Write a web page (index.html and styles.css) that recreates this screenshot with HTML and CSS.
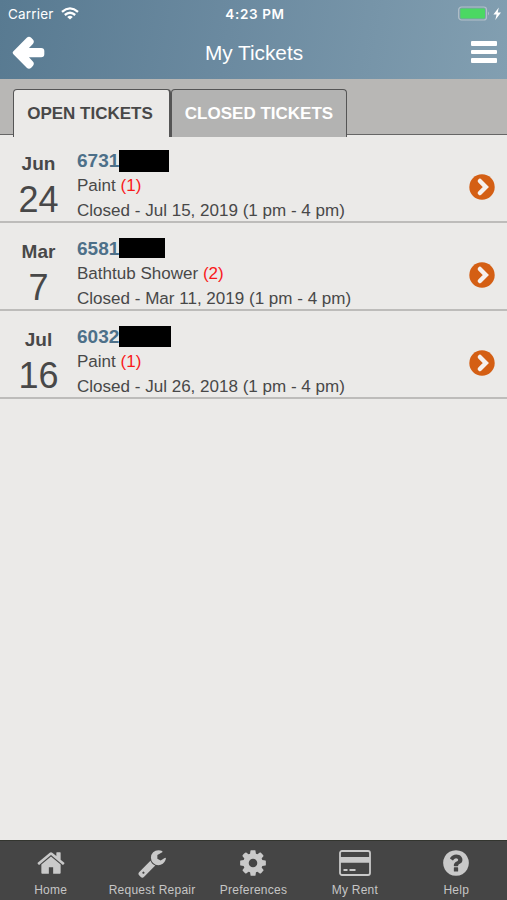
FILE: index.html
```html
<!DOCTYPE html>
<html lang="en">
<head>
<meta charset="utf-8">
<title>My Tickets</title>
<link rel="stylesheet" href="styles.css">
</head>
<body>
<header class="header">
  <div class="status">
    <div class="carrier"><span>Carrier</span>
      <svg class="wifi" viewBox="0 0 18 13" fill="none" stroke="#fff" stroke-width="2.300"><path d="M1 4.800Q9-2 17 4.800M3.800 8Q9 3.600 14.200 8"/><path d="M6.200 9.900Q9 7.700 11.800 9.900L9 12.600Z" fill="#fff" stroke="none"/></svg>
    </div>
    <span class="clock">4:23 PM</span>
    <div class="power">
      <svg viewBox="0 0 44 16"><rect x=".7" y="1" width="27.800" height="13" rx="2.800" fill="none" stroke="#b3c0c9" stroke-width="1.200"/><rect x="2.300" y="2.600" width="24.700" height="9.800" rx="1" fill="#4bd863"/><path d="M30 5.500q2 2 0 4z" fill="#b3c0c9"/><path d="M40.800 1.600L35.400 8.600H38.600L37.300 13.900L43 6.500H39.700Z" fill="#fff"/></svg>
    </div>
  </div>
  <div class="navbar">
    <svg class="back" viewBox="0 0 34 36"><path d="M1.200 16.500L15.200 2.200Q17.500.200 19.800 2.200L21.500 4Q23.500 6.300 21.500 8.600L17.500 12.900H30Q33.300 13.100 33.300 16V19.300Q33.300 22.300 30 22.500H17.500L21.500 26.800Q23.500 29.100 21.500 31.400L19.800 33.100Q17.500 35.100 15.200 33.100L1.200 19.100Q0 17.800 1.200 16.500Z" fill="#fff"/></svg>
    <h1>My Tickets</h1>
    <div class="menu"><i></i><i></i><i></i></div>
  </div>
</header>
<nav class="tabs">
  <div class="tab active"><span>OPEN TICKETS</span></div>
  <div class="tab"><span>CLOSED TICKETS</span></div>
</nav>
<main class="list">
  <article class="row">
    <div class="date"><b>Jun</b><span>24</span></div>
    <div class="info">
      <div class="number">6731<i class="mask first"></i></div>
      <div class="line">Paint <em>(1)</em></div>
      <div class="line detail">Closed - Jul 15, 2019 (1 pm - 4 pm)</div>
    </div>
    <svg class="go" viewBox="0 0 26 26"><circle cx="13" cy="13" r="12.700" fill="#d45f14"/><path d="M10.900 7L16.800 13L10.900 19" fill="none" stroke="#f6f1ee" stroke-width="4.500" stroke-linecap="round"/></svg>
  </article>
  <article class="row">
    <div class="date"><b>Mar</b><span>7</span></div>
    <div class="info">
      <div class="number">6581<i class="mask second"></i></div>
      <div class="line">Bathtub Shower <em>(2)</em></div>
      <div class="line detail">Closed - Mar 11, 2019 (1 pm - 4 pm)</div>
    </div>
    <svg class="go" viewBox="0 0 26 26"><circle cx="13" cy="13" r="12.700" fill="#d45f14"/><path d="M10.900 7L16.800 13L10.900 19" fill="none" stroke="#f6f1ee" stroke-width="4.500" stroke-linecap="round"/></svg>
  </article>
  <article class="row">
    <div class="date"><b>Jul</b><span>16</span></div>
    <div class="info">
      <div class="number">6032<i class="mask third"></i></div>
      <div class="line">Paint <em>(1)</em></div>
      <div class="line detail">Closed - Jul 26, 2018 (1 pm - 4 pm)</div>
    </div>
    <svg class="go" viewBox="0 0 26 26"><circle cx="13" cy="13" r="12.700" fill="#d45f14"/><path d="M10.900 7L16.800 13L10.900 19" fill="none" stroke="#f6f1ee" stroke-width="4.500" stroke-linecap="round"/></svg>
  </article>
</main>
<footer class="footer">
  <div class="item"><svg viewBox="0 0 1792 1792"><path d="M1472 992v480q0 26-19 45t-45 19h-384v-384h-256v384h-384q-26 0-45-19t-19-45v-480q0-1 .5-3t.5-3l575-474 575 474q1 2 1 6zm223-69l-62 74q-8 9-21 11h-3q-13 0-21-7l-692-577-692 577q-12 8-24 7-13-2-21-11l-62-74q-8-10-7-23.500t11-21.500l719-599q32-26 76-26t76 26l244 204v-195q0-14 9-23t23-9h192q14 0 23 9t9 23v408l219 182q10 8 11 21.500t-7 23.500z"/></svg><span>Home</span></div>
  <div class="item"><svg viewBox="0 0 1792 1792"><path d="M448 1472q0-26-19-45t-45-19-45 19-19 45 19 45 45 19 45-19 19-45zm644-420l-682 682q-37 37-90 37-52 0-91-37l-106-108q-38-36-38-90 0-53 38-91l681-681q39 98 114.500 173.500t173.500 114.500zm634-435q0 39-23 106-47 134-164.500 217.500t-258.500 83.500q-185 0-316.500-131.500t-131.500-316.500 131.500-316.500 316.500-131.500q58 0 121.500 16.500t107.500 46.500q16 11 16 28t-16 28l-293 169v224l193 107q5-3 79-48.500t135.500-81 70.500-35.500q15 0 23.500 10t8.500 25z"/></svg><span>Request Repair</span></div>
  <div class="item"><svg viewBox="0 0 1792 1792"><path d="M1152 896q0-106-75-181t-181-75-181 75-75 181 75 181 181 75 181-75 75-181zm512-109v222q0 12-8 23t-20 13l-185 28q-19 54-39 91 35 50 107 138 10 12 10 25t-9 23q-27 37-99 108t-94 71q-12 0-26-9l-138-108q-44 23-91 38-16 136-29 186-7 28-36 28h-222q-14 0-24.500-8.500t-11.500-21.500l-28-184q-49-16-90-37l-141 107q-10 9-25 9-14 0-25-11-126-114-165-168-7-10-7-23 0-12 8-23 15-21 51-66.500t54-70.500q-27-50-41-99l-183-27q-13-2-21-12.500t-8-23.500v-222q0-12 8-23t19-13l186-28q14-46 39-92-40-57-107-138-10-12-10-24 0-10 9-23 26-36 98.500-107.500t94.500-71.500q13 0 26 10l138 107q44-23 91-38 16-136 29-186 7-28 36-28h222q14 0 24.500 8.500t11.500 21.500l28 184q49 16 90 37l142-107q9-9 24-9 13 0 25 10 129 119 165 170 7 8 7 22 0 12-8 23-15 21-51 66.500t-54 70.500q26 50 41 98l183 28q13 2 21 12.500t8 23.500z"/></svg><span>Preferences</span></div>
  <div class="item"><svg class="card" viewBox="0 0 32 30"><rect x="1" y="3" width="30" height="24" rx="2" fill="none" stroke="#c9c9c9" stroke-width="1.800"/><path d="M1 9h30v5.800H1zM4.500 21h4v2h-4zM10.500 21h6v2h-6z"/></svg><span>My Rent</span></div>
  <div class="item"><svg viewBox="0 0 1792 1792"><path d="M1024 1376v-192q0-14-9-23t-23-9h-192q-14 0-23 9t-9 23v192q0 14 9 23t23 9h192q14 0 23-9t9-23zm256-672q0-88-55.500-163t-138.500-116-170-41q-243 0-371 213-15 24 8 42l132 100q7 6 19 6 16 0 25-12 53-68 86-92 34-24 86-24 48 0 85.500 26t37.500 59q0 38-20 61t-68 45q-63 28-115.500 86.500t-52.500 125.500v36q0 14 9 23t23 9h192q14 0 23-9t9-23q0-19 21.500-49.500t54.500-49.500q32-18 49-28.500t46-35 44.500-48 28-60.500 12.500-81zm384 192q0 209-103 385.500t-279.500 279.500-385.500 103-385.500-103-279.500-279.500-103-385.500 103-385.500 279.500-279.500 385.500-103 385.500 103 279.500 279.500 103 385.500z"/></svg><span>Help</span></div>
</footer>
</body>
</html>
```
FILE: styles.css
```css
* { box-sizing: border-box; }
body {
  margin: 0;
  height: 900px;
  display: flex;
  flex-direction: column;
  background: #ebeae8;
  color: #484848;
  font-family: "Liberation Sans", Arial, sans-serif;
  overflow: hidden;
}
.header {
  height: 79px;
  flex: none;
  color: #fff;
  background: linear-gradient(100deg, #587a91 0%, #6b8aa0 45%, #829fb1 100%);
}
.status {
  height: 27px;
  display: grid;
  grid-template-columns: 1fr auto 1fr;
  align-items: center;
  padding: 0 5px 0 8px;
  font-family: Inter, sans-serif;
  font-size: 13.500px;
}
.carrier { display: flex; align-items: center; gap: 7px; letter-spacing: .2px; }
.wifi { width: 18px; height: 13px; }
.clock { font-weight: 600; letter-spacing: .65px; }
.power { display: flex; justify-content: flex-end; }
.power svg { width: 44px; height: 16px; }
.navbar {
  height: 52px;
  display: grid;
  grid-template-columns: 1fr auto 1fr;
  align-items: center;
  padding: 0 10px 0 12px;
}
.back { width: 33px; height: 36px; }
h1 { margin: 0 1px 0 0; font-weight: 400; font-size: 20.800px; line-height: 24px; }
.menu { display: flex; flex-direction: column; gap: 4px; justify-self: end; margin-top: -2px; }
.menu i { width: 26px; height: 4.500px; border-radius: 1px; background: #fff; }
.tabs {
  height: 56px;
  flex: none;
  display: flex;
  align-items: flex-start;
  padding: 10px 0 0 13px;
  background: #b8b7b5;
  border-bottom: 1px solid #666;
}
.tab {
  height: 48px;
  display: flex;
  justify-content: center;
  align-items: center;
  width: 176px;
  border: 1px solid #555;
  border-bottom: 0;
  border-radius: 4px 4px 0 0;
  background: #b3b3b2;
  color: #fff;
  font-weight: 700;
  font-size: 17px;
}
.tab.active { width: 158px; padding-right: 3px; background: #ebeae8; color: #484848; border-right-width: 2px; }
.list { flex: 1; }
.row {
  height: 88px;
  display: flex;
  border-bottom: 2px solid #bdbcba;
}
.date {
  width: 77px;
  display: flex;
  flex-direction: column;
  align-items: center;
  padding-top: 18px;
}
.date b { font-size: 19px; line-height: 22px; }
.date span { font-size: 36px; line-height: 40px; margin-top: 5px; }
.info { flex: 1; padding-top: 12px; }
.number {
  display: flex;
  height: 27px;
  line-height: 27px;
  font-size: 19px;
  font-weight: 700;
  color: #4d7089;
}
.mask { background: #000; height: 22px; margin-top: 2px; }
.first { width: 50px; }
.second { width: 46px; height: 20px; }
.third { width: 52px; height: 21px; }
.number .mask { margin-top: 3px; }
.line { font-size: 17.050px; line-height: 24.500px; }
.line em { font-style: normal; color: #f9191b; }
.go { width: 26px; height: 26px; margin: 39px 12px 0 0; }
.footer {
  height: 60px;
  flex: none;
  display: grid;
  grid-template-columns: repeat(5, 1fr);
  background: #454545;
  border-top: 1px solid #33352f;
  color: #c6c6c6;
  font-size: 12px;
}
.item { display: flex; flex-direction: column; align-items: center; padding-top: 7px; white-space: nowrap; }
.item svg { width: 30px; height: 30px; fill: #c9c9c9; }
.item .card { width: 32px; }
.item span { line-height: 16px; margin-top: 4px; letter-spacing: .25px; }
```
